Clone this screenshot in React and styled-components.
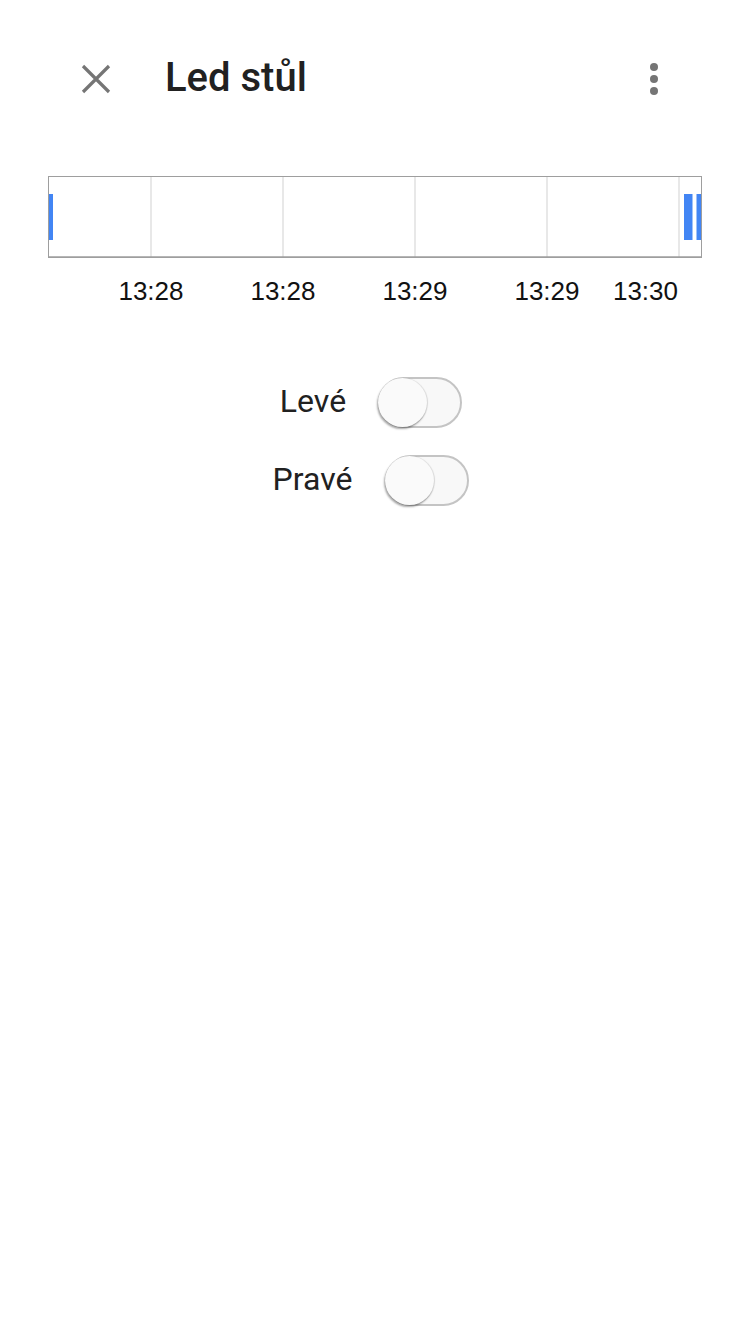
import React from "react";
import styled, { createGlobalStyle } from "styled-components";

const GlobalStyle = createGlobalStyle`
  html, body {
    margin: 0;
    padding: 0;
    background: #ffffff;
  }
  body {
    font-family: Roboto, "Noto Sans", Arial, sans-serif;
    color: #212121;
  }
`;

const Page = styled.div`
  width: 750px;
  min-height: 1334px;
  background: #ffffff;
  display: flex;
  flex-direction: column;
`;

const Header = styled.header`
  height: 158px;
  display: flex;
  align-items: center;
  padding: 0 80px 0 80px;
  box-sizing: border-box;
`;

const IconButton = styled.button`
  width: 32px;
  height: 32px;
  padding: 0;
  border: none;
  background: transparent;
  display: flex;
  align-items: center;
  justify-content: center;
  flex: none;
`;

const Title = styled.h1`
  flex: 1;
  margin: 0 0 2px 53px;
  font-family: Roboto, "Noto Sans", sans-serif;
  font-weight: 500;
  font-size: 40px;
  line-height: 1;
  color: #212121;
`;

const ChartWrap = styled.div`
  margin: 18px 48px 0 48px;
  width: 654px;
`;

const ToggleList = styled.div`
  margin-top: 71px;
  padding-right: 8px;
  display: flex;
  flex-direction: column;
  gap: 27px;
`;

const ToggleRow = styled.label`
  display: flex;
  align-items: center;
  justify-content: center;
  gap: ${(p) => p.$gap}px;
  height: 51px;
`;

const ToggleLabel = styled.span`
  font-family: Roboto, "Noto Sans", sans-serif;
  font-size: 32px;
  line-height: 1;
  color: #212121;
  margin-bottom: 3px;
`;

const Track = styled.span`
  position: relative;
  width: 84px;
  height: 51px;
  box-sizing: border-box;
  border: 2px solid #c4c4c4;
  border-radius: 26px;
  background: #f8f8f8;
  flex: none;
`;

const Knob = styled.span`
  position: absolute;
  left: -2px;
  top: -1px;
  width: 49px;
  height: 49px;
  border-radius: 50%;
  background: #fafafa;
  box-shadow: -1px 2px 2px rgba(0, 0, 0, 0.35), 1px 0 1px rgba(0, 0, 0, 0.12);
`;

function CloseIcon() {
  return (
    <svg width="32" height="32" viewBox="0 0 32 32">
      <path d="M3 3 L29 29 M29 3 L3 29" stroke="#757575" strokeWidth="3.2" strokeLinecap="butt" />
    </svg>
  );
}

function MoreIcon() {
  return (
    <svg width="32" height="32" viewBox="0 0 32 32">
      <circle cx="16" cy="4" r="4" fill="#757575" />
      <circle cx="16" cy="16" r="4" fill="#757575" />
      <circle cx="16" cy="28" r="4" fill="#757575" />
    </svg>
  );
}

const ticks = [
  { x: 103, label: "13:28" },
  { x: 235, label: "13:28" },
  { x: 367, label: "13:29" },
  { x: 499, label: "13:29" },
  { x: 631, label: "13:30", anchor: "end", lx: 630 },
];

function Timeline() {
  return (
    <svg width="654" height="130" viewBox="0 0 654 130" style={{ display: "block" }}>
      <rect x="0" y="0" width="654" height="82" fill="#ffffff" />
      {ticks.map((t, i) => (
        <line key={i} x1={t.x} y1="0" x2={t.x} y2="82" stroke="#e3e3e3" strokeWidth="1.6" />
      ))}
      <rect x="0" y="18" width="5" height="46" fill="#4285f4" />
      <rect x="636" y="18" width="8.5" height="46" fill="#4285f4" />
      <rect x="648.5" y="18" width="5.5" height="46" fill="#4285f4" />
      <line x1="0.5" y1="0" x2="0.5" y2="82" stroke="#9e9e9e" strokeWidth="1" />
      <line x1="653.5" y1="0" x2="653.5" y2="82" stroke="#9e9e9e" strokeWidth="1" />
      <line x1="0" y1="0.5" x2="654" y2="0.5" stroke="#9e9e9e" strokeWidth="1" />
      <line x1="0" y1="81.2" x2="654" y2="81.2" stroke="#9e9e9e" strokeWidth="1.8" />
      {ticks.map((t, i) => (
        <text
          key={"l" + i}
          x={t.lx ?? t.x}
          y="124"
          textAnchor={t.anchor ?? "middle"}
          fontFamily='"Liberation Sans", Arial, sans-serif'
          fontSize="26"
          fill="#111111"
        >
          {t.label}
        </text>
      ))}
    </svg>
  );
}

function Toggle({ label, gap }) {
  return (
    <ToggleRow $gap={gap}>
      <ToggleLabel>{label}</ToggleLabel>
      <Track>
        <Knob />
      </Track>
    </ToggleRow>
  );
}

export default function App() {
  return (
    <>
      <GlobalStyle />
      <Page>
        <Header>
          <IconButton aria-label="Zavřít">
            <CloseIcon />
          </IconButton>
          <Title>Led stůl</Title>
          <IconButton aria-label="Další">
            <MoreIcon />
          </IconButton>
        </Header>
        <ChartWrap>
          <Timeline />
        </ChartWrap>
        <ToggleList>
          <Toggle label="Levé" gap={32} />
          <Toggle label="Pravé" gap={33} />
        </ToggleList>
      </Page>
    </>
  );
}
